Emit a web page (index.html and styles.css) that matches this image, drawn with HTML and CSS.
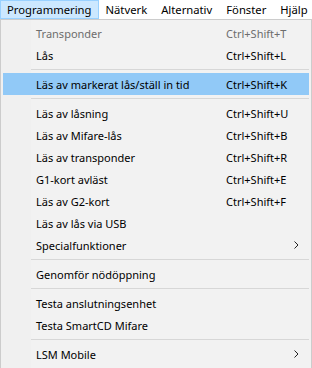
FILE: index.html
```html
<!DOCTYPE html>
<html lang="sv">
<head>
<meta charset="UTF-8">
<meta name="viewport" content="width=device-width, initial-scale=1.0">
<title>Programmering</title>
<link rel="stylesheet" href="styles.css">
</head>
<body>
<div id="menubar">
  <span class="top-item active">Programmering</span>
  <span class="top-item">Nätverk</span>
  <span class="top-item">Alternativ</span>
  <span class="top-item">Fönster</span>
  <span class="top-item">Hjälp</span>
</div>

<div id="dropdown">
  <div class="item disabled"><span class="label">Transponder</span><span class="key">Ctrl+Shift+T</span></div>
  <div class="item"><span class="label">Lås</span><span class="key">Ctrl+Shift+L</span></div>
  <div class="sep"></div>
  <div class="item hover"><span class="label">Läs av markerat lås/ställ in tid</span><span class="key">Ctrl+Shift+K</span></div>
  <div class="sep"></div>
  <div class="item"><span class="label">Läs av låsning</span><span class="key">Ctrl+Shift+U</span></div>
  <div class="item"><span class="label">Läs av Mifare-lås</span><span class="key">Ctrl+Shift+B</span></div>
  <div class="item"><span class="label">Läs av transponder</span><span class="key">Ctrl+Shift+R</span></div>
  <div class="item"><span class="label">G1-kort avläst</span><span class="key">Ctrl+Shift+E</span></div>
  <div class="item"><span class="label">Läs av G2-kort</span><span class="key">Ctrl+Shift+F</span></div>
  <div class="item"><span class="label">Läs av lås via USB</span></div>
  <div class="item"><span class="label">Specialfunktioner</span>
    <svg class="arrow" width="5" height="8" viewBox="0 0 5 8"><polyline points="0.5,0.5 4,4 0.5,7.5" fill="none" stroke="#222" stroke-width="1"/></svg>
  </div>
  <div class="sep"></div>
  <div class="item"><span class="label">Genomför nödöppning</span></div>
  <div class="sep"></div>
  <div class="item"><span class="label">Testa anslutningsenhet</span></div>
  <div class="item"><span class="label">Testa SmartCD Mifare</span></div>
  <div class="sep"></div>
  <div class="item"><span class="label">LSM Mobile</span>
    <svg class="arrow" width="5" height="8" viewBox="0 0 5 8"><polyline points="0.5,0.5 4,4 0.5,7.5" fill="none" stroke="#222" stroke-width="1"/></svg>
  </div>
</div>
</body>
</html>
```

FILE: styles.css
```css
body {
  margin: 0;
  font-family: "Noto Sans", "Open Sans", sans-serif;
  font-size: 11px;
  color: #000;
  background-color: #fff;
}
#menubar {
  display: flex;
  height: 19px;
  font-size: 11.25px;
  background-color: #fff;
}
.top-item {
  padding: 0 7px;
  line-height: 19px;
}
.top-item.active {
  padding: 0 6px;
  background-color: #cce8ff;
  border: 1px solid #99d1ff;
  line-height: 17px;
}
#dropdown {
  height: 347px;
  border: 1px solid #ccc;
  padding: 2px;
  background: linear-gradient(to right, #f0f0f0 30px, #f2f2f2 30px);
}
.item {
  display: flex;
  align-items: center;
  height: 22px;
  padding-left: 33px;
  white-space: nowrap;
}
.item.disabled {
  color: #6d6d6d;
}
.item.hover {
  background-color: #91c9f7;
}
.label {
  width: 190px;
}
.arrow {
  margin-left: auto;
  margin-right: 10px;
}
.sep {
  height: 1px;
  margin: 3px 0 3px 28px;
  background-color: #d7d7d7;
}
```
